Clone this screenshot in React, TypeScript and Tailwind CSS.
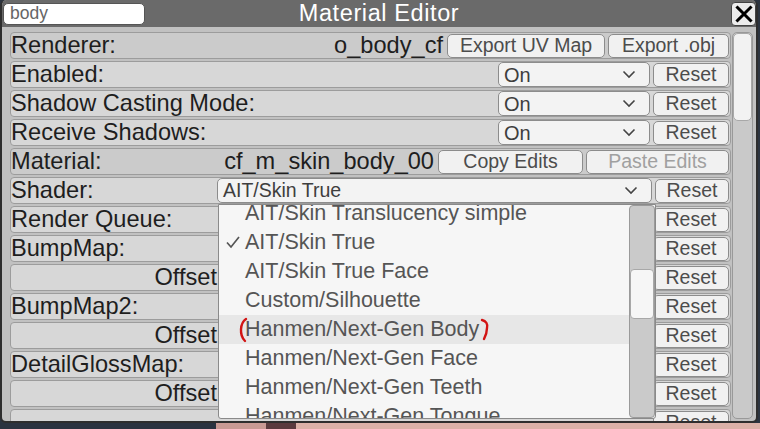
import React from "react";

const font = { fontFamily: '"Liberation Sans", Arial, sans-serif' };

function Btn({ w, children, disabled }: { w: string; children: React.ReactNode; disabled?: boolean }) {
  return (
    <div
      className={`${w} h-[24px] shrink-0 rounded-[5px] border border-[#8c8c8c] bg-[#f1f1f1] flex items-center justify-center text-[19.5px] leading-none ${
        disabled ? "text-[#a0a0a0]" : "text-[#4c4c4c]"
      }`}
    >
      {children}
    </div>
  );
}

function Chevron() {
  return (
    <svg width="14" height="9" viewBox="0 0 14 9" className="shrink-0">
      <polyline points="1.5,1.5 7,7 12.5,1.5" fill="none" stroke="#444" strokeWidth="1.6" />
    </svg>
  );
}

function Select({ w, value, size }: { w: string; value: string; size: string }) {
  return (
    <div
      className={`${w} h-[25px] shrink-0 rounded-[5px] border border-[#8c8c8c] bg-[#f3f3f3] flex items-center pl-[5px] pr-[13px] ${size} leading-none text-[#3e3e3e]`}
    >
      <span className="flex-1">{value}</span>
      <Chevron />
    </div>
  );
}

function Row({
  label,
  header,
  children,
  right,
}: {
  label: string;
  header?: boolean;
  children?: React.ReactNode;
  right?: boolean;
}) {
  return (
    <div
      className={`h-[27px] shrink-0 rounded-[4px] border border-[#9c9c9c] ${
        header ? "bg-[#cbcbcb]" : "bg-[#d7d7d7]"
      } flex items-center gap-[3px] pr-[1px]`}
    >
      <div
        className={`${right ? "w-[206px] text-right" : "flex-1"} text-[23.6px] leading-none text-[#1e1e1e] whitespace-nowrap`}
      >
        {label}
      </div>
      {right && <div className="flex-1" />}
      {children}
    </div>
  );
}

const Reset = () => <Btn w="w-[76px]">Reset</Btn>;

export default function App() {
  const items = [
    "AIT/Skin Translucency simple",
    "AIT/Skin True",
    "AIT/Skin True Face",
    "Custom/Silhouette",
    "Hanmen/Next-Gen Body",
    "Hanmen/Next-Gen Face",
    "Hanmen/Next-Gen Teeth",
    "Hanmen/Next-Gen Tongue",
  ];
  return (
    <div className="w-[760px] h-[429px] flex flex-col overflow-hidden bg-[#2c3440]" style={font}>
      <div className="relative w-[758px] h-[423px] shrink-0 rounded-[6px] border-2 border-t-0 border-[#2e2e2e] bg-[#c1c1c1] flex flex-col overflow-hidden">
        {/* title bar */}
        <div className="h-[27px] shrink-0 bg-[#6a6a6a] flex items-center pl-[1px] pr-[0px] relative">
          <div className="w-[142px] h-[22px] mt-[1px] rounded-[5px] border border-[#555] bg-white flex items-center pl-[6px] text-[17.5px] leading-none text-[#666]">
            body
          </div>
          <div className="flex-1 text-center text-[23.5px] tracking-[0.6px] leading-none text-white pr-[118px]">
            Material Editor
          </div>
          <div className="w-[25px] h-[24px] mt-[1px] rounded-[4px] border border-[#444] bg-[#ececec] flex items-center justify-center">
            <svg width="18" height="18" viewBox="0 0 18 18">
              <path d="M2.5 2.5 L15.5 15.5 M15.5 2.5 L2.5 15.5" stroke="#000" strokeWidth="3" strokeLinecap="square" />
            </svg>
          </div>
        </div>
        {/* content */}
        <div className="flex-1 flex pt-[5px] pl-[8px] pr-[3px] gap-[1px] min-h-0">
          <div className="w-[721px] flex flex-col gap-[2px] overflow-hidden">
            <Row label="Renderer:" header>
              <div className="text-[23.6px] leading-none text-[#1e1e1e] pr-[1px]">o_body_cf</div>
              <Btn w="w-[158px]">Export UV Map</Btn>
              <Btn w="w-[121px]">Export .obj</Btn>
            </Row>
            <Row label="Enabled:">
              <Select w="w-[152px]" value="On" size="text-[20px]" />
              <Reset />
            </Row>
            <Row label="Shadow Casting Mode:">
              <Select w="w-[152px]" value="On" size="text-[20px]" />
              <Reset />
            </Row>
            <Row label="Receive Shadows:">
              <Select w="w-[152px]" value="On" size="text-[20px]" />
              <Reset />
            </Row>
            <Row label="Material:" header>
              <div className="text-[23.6px] leading-none text-[#1e1e1e] pr-[1px]">cf_m_skin_body_00</div>
              <Btn w="w-[145px]">Copy Edits</Btn>
              <Btn w="w-[143px]" disabled>
                Paste Edits
              </Btn>
            </Row>
            <Row label="Shader:">
              <Select w="w-[435px]" value="AIT/Skin True" size="text-[19.5px]" />
              <Btn w="w-[74px]">Reset</Btn>
            </Row>
            <Row label="Render Queue:">
              <Reset />
            </Row>
            <Row label="BumpMap:">
              <Reset />
            </Row>
            <Row label="Offset" right>
              <Reset />
            </Row>
            <Row label="BumpMap2:">
              <Reset />
            </Row>
            <Row label="Offset" right>
              <Reset />
            </Row>
            <Row label="DetailGlossMap:">
              <Reset />
            </Row>
            <Row label="Offset" right>
              <Reset />
            </Row>
            <Row label="">
              <Reset />
            </Row>
          </div>
          {/* main scrollbar */}
          <div className="w-[21px] h-[387px] rounded-[5px] border border-[#999] bg-[#c9c9c9] flex flex-col">
            <div className="h-[88px] rounded-[5px] border border-[#a8a8a8] bg-[#f2f2f2]" />
          </div>
        </div>

        {/* dropdown popup */}
        <div className="absolute left-[216px] top-[204px] w-[438px] h-[215px] border border-[#8a8a8a] bg-[#f6f6f6] flex overflow-hidden rounded-b-[3px]">
          <div className="flex-1 flex flex-col -mt-[6px] relative">
            {items.map((it, i) => (
              <div
                key={it}
                className={`h-[29px] shrink-0 flex items-center pl-[26px] text-[21.5px] leading-none text-[#555] relative ${
                  i === 4 ? "bg-[#e7e7e7]" : ""
                }`}
              >
                {i === 1 && (
                  <svg width="14" height="13" viewBox="0 0 14 13" className="absolute left-[7px] top-[8px]">
                    <polyline points="1,6.5 5,11 13,1" fill="none" stroke="#555" strokeWidth="1.7" />
                  </svg>
                )}
                {i === 4 && (
                  <>
                    <svg width="10" height="26" viewBox="0 0 10 26" className="absolute left-[19px] top-[2px]">
                      <path d="M8 2 C2 6, 1 18, 7 24" fill="none" stroke="#d21414" strokeWidth="2.4" strokeLinecap="round" />
                    </svg>
                    <svg width="10" height="24" viewBox="0 0 10 24" className="absolute left-[261px] top-[3px]">
                      <path d="M2 2 C6 3, 8 6, 7 10 C7 14, 6 17, 4 21" fill="none" stroke="#d21414" strokeWidth="2.4" strokeLinecap="round" />
                    </svg>
                  </>
                )}
                {it}
              </div>
            ))}
          </div>
          <div className="w-[26px] h-full rounded-[4px] border border-[#9a9a9a] bg-[#cacaca] flex flex-col pt-[63px]">
            <div className="h-[50px] rounded-[4px] border border-[#a8a8a8] bg-[#f6f6f6]" />
          </div>
        </div>
      </div>
      {/* background strip */}
      <div className="flex-1 flex">
        <div className="w-[216px] bg-[#2b3340]" />
        <div className="w-[50px] bg-[#c99a94]" />
        <div className="w-[30px] bg-[#5a3a3e]" />
        <div className="flex-1 bg-[#dcb1a8]" />
      </div>
    </div>
  );
}
